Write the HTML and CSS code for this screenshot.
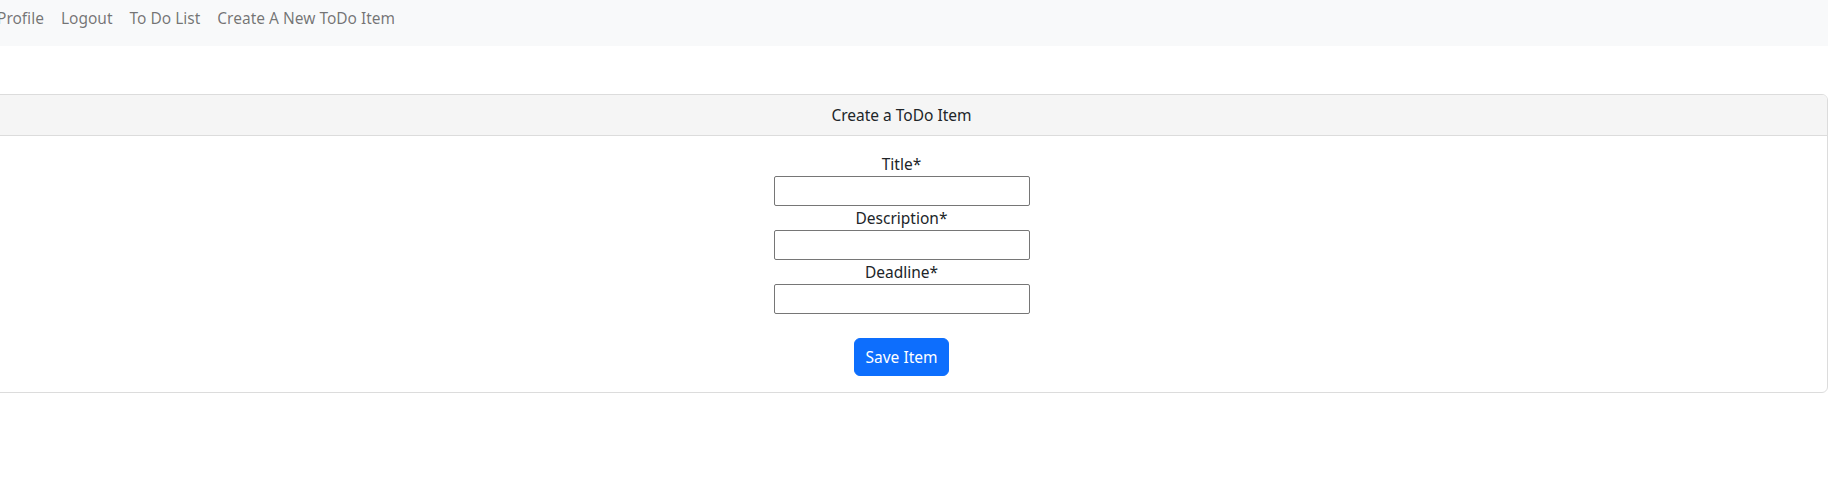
FILE: index.html
```html
<!DOCTYPE html>
<html lang="en">
<head>
<meta charset="utf-8">
<title>Create a ToDo Item</title>
<link rel="stylesheet" href="styles.css">
</head>
<body>
<div class="page">
  <nav class="navbar">
    <a class="nav-link" href="#">Profile</a>
    <a class="nav-link" href="#">Logout</a>
    <a class="nav-link" href="#">To Do List</a>
    <a class="nav-link" href="#">Create A New ToDo Item</a>
  </nav>
  <div class="card">
    <div class="card-header">Create a ToDo Item</div>
    <form class="card-body">
      <label class="field-label" for="title">Title*</label>
      <input class="field-input" id="title" type="text">
      <label class="field-label" for="description">Description*</label>
      <input class="field-input" id="description" type="text">
      <label class="field-label" for="deadline">Deadline*</label>
      <input class="field-input" id="deadline" type="text">
      <button class="btn-primary" type="button">Save Item</button>
    </form>
  </div>
</div>
</body>
</html>
```

FILE: styles.css
```css
html, body {
  margin: 0;
  padding: 0;
  background: #fff;
  overflow: hidden;
}
body {
  font-family: "Noto Sans", "Open Sans", sans-serif;
  font-size: 15.5px;
  line-height: 24px;
  color: #212529;
}
.page {
  width: 1853px;
  margin-left: -25px;
}
.navbar {
  height: 46px;
  box-sizing: border-box;
  background: #f8f9fa;
  display: flex;
  padding: 6px 0 0 14px;
  gap: 1px;
}
.nav-link {
  color: rgba(0, 0, 0, 0.55);
  text-decoration: none;
  padding: 0 8px;
}
.card {
  margin-top: 48px;
  border: 1px solid #dcdcdc;
  border-radius: 6px;
  overflow: hidden;
}
.card-header {
  background: #f5f5f5;
  border-bottom: 1px solid #dcdcdc;
  padding: 8px 16px;
  text-align: center;
}
.card-body {
  display: flex;
  flex-direction: column;
  align-items: center;
  padding: 16px;
  margin: 0;
}
.field-label {
  display: block;
  height: 24px;
}
.field-input {
  box-sizing: border-box;
  width: 256px;
  height: 30px;
  border: 1px solid #767676;
  border-radius: 2px;
  margin: 0;
  padding: 1px 2px;
  background: #fff;
}
.btn-primary {
  margin-top: 24px;
  font-family: inherit;
  font-size: 15.5px;
  line-height: 24px;
  padding: 6px 11px;
  height: 38px;
  box-sizing: border-box;
  color: #fff;
  background: #0d6efd;
  border: 1px solid #0d6efd;
  border-radius: 6px;
}
```
